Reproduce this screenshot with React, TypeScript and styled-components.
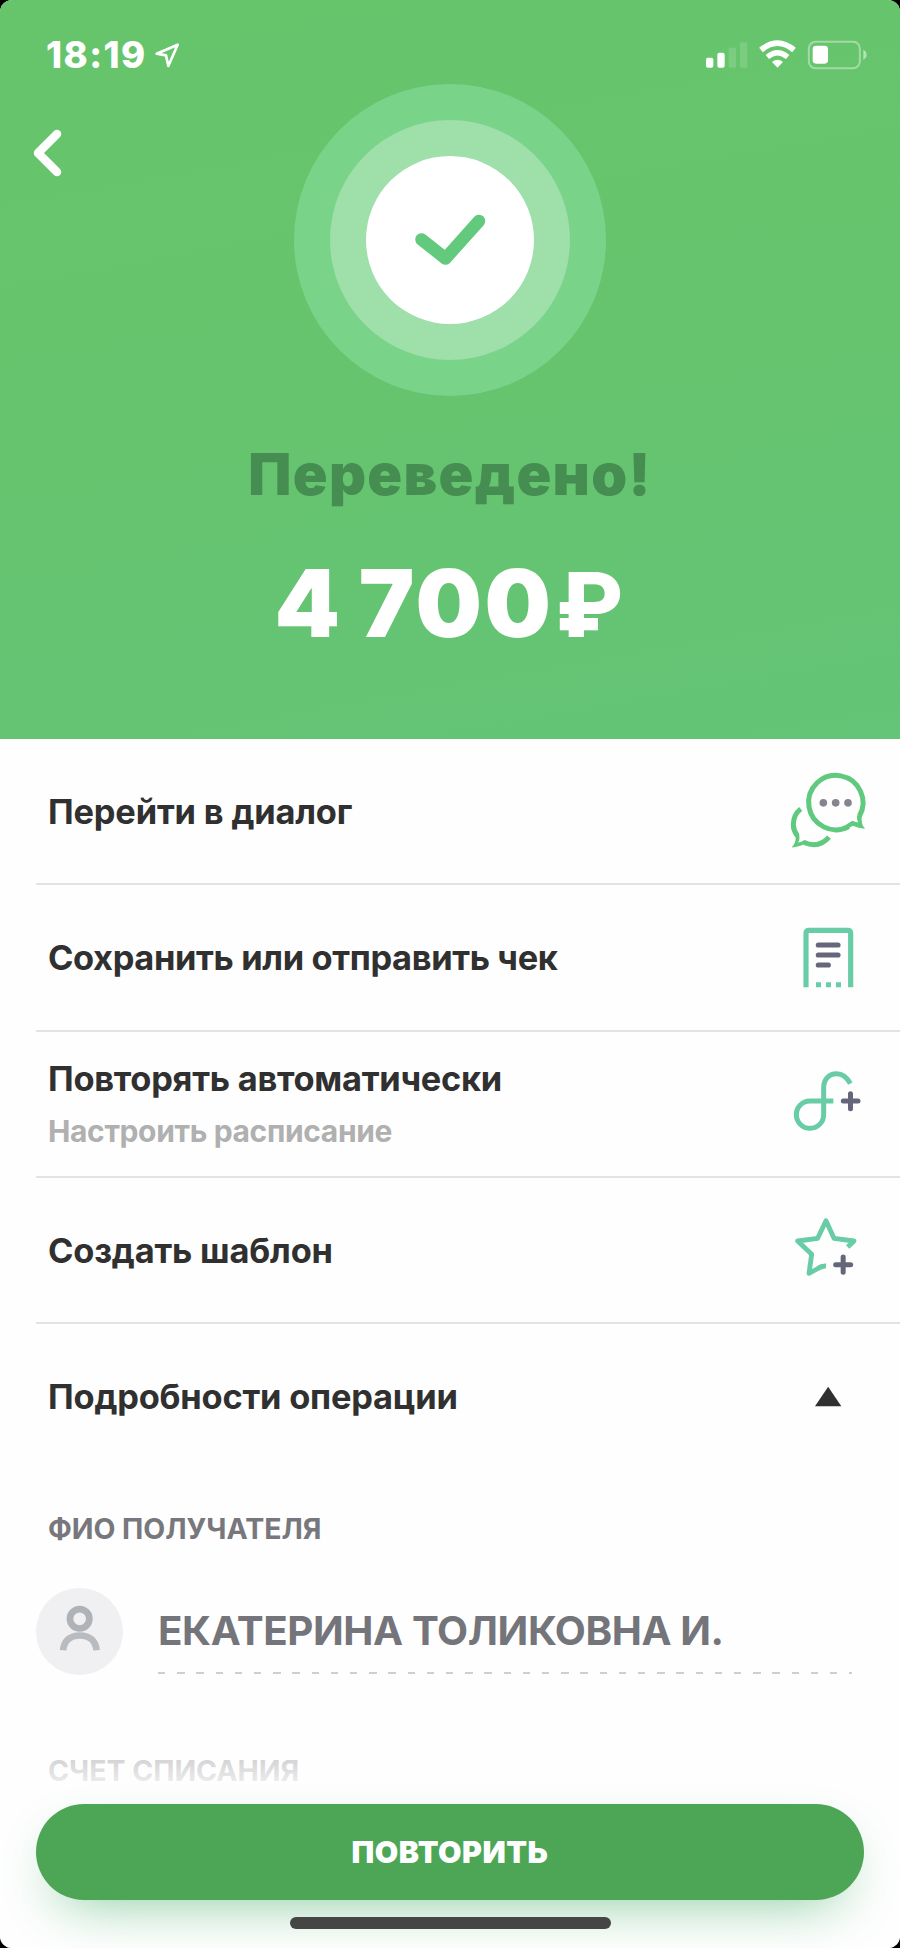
import React from 'react';
import styled, { createGlobalStyle } from 'styled-components';

const GlobalStyle = createGlobalStyle`
  body { margin: 0; background: #000; }
  * { box-sizing: border-box; }
`;

const Screen = styled.div`
  position: relative;
  width: 900px;
  height: 1948px;
  overflow: hidden;
  border-radius: 12px;
  background: #fefefe;
  font-family: Inter, "Noto Sans", sans-serif;
  font-weight: 700;
  color: #303030;
`;

const Hero = styled.header`
  display: flex;
  flex-direction: column;
  align-items: center;
  height: 739px;
  background: linear-gradient(170deg, #66c56b 0%, #66c46e 50%, #64c477 100%);
`;

const StatusBar = styled.div`
  display: flex;
  align-items: center;
  width: 100%;
  height: 84px;
  padding: 26px 31px 0 46px;
  color: #fff;
`;

const Clock = styled.span`
  width: 102px;
  font-size: 36.5px;
  line-height: 40px;
  font-weight: 800;
  letter-spacing: 1.4px;
`;

const LocationIcon = styled.svg`
  width: 26px;
  height: 26px;
  margin: 0 auto 0 5.7px;
`;

const StatusIcons = styled.svg`
  width: 165px;
  height: 34px;
`;

const HeroTop = styled.div`
  display: grid;
  grid-template-columns: 1fr 312px 1fr;
  width: 100%;
  height: 312px;
`;

const BackButton = styled.button`
  width: 60px;
  height: 60px;
  margin: 39px 0 0 17px;
  padding: 0;
  border: 0;
  background: none;
`;

const Ring = styled.div<{ $size: number; $color: string }>`
  display: flex;
  align-items: center;
  justify-content: center;
  width: ${(p) => p.$size}px;
  height: ${(p) => p.$size}px;
  border-radius: 50%;
  background: ${(p) => p.$color};
`;

const Status = styled.h1`
  margin: 43px 0 0;
  font-size: 57.5px;
  line-height: 70px;
  font-weight: 900;
  letter-spacing: 1.3px;
  color: #468d51;
`;

const Amount = styled.div`
  display: flex;
  align-items: baseline;
  margin-top: 44px;
  font-size: 93.5px;
  line-height: 100px;
  font-weight: 900;
  letter-spacing: 2.5px;
  word-spacing: -5px;
  color: #fff;
`;

const Currency = styled.span`
  margin-left: 2px;
  font-size: 89px;
  font-weight: 800;
`;

const Row = styled.div<{ $last?: boolean }>`
  display: flex;
  align-items: center;
  justify-content: space-between;
  height: ${(p) => (p.$last ? 144 : 146.25)}px;
  margin-left: 36px;
  padding: ${(p) => (p.$last ? 1 : 2)}px 29.3px 0 12px;
  border-bottom: ${(p) => (p.$last ? 0 : 2)}px solid #e3e3e3;
`;

const RowText = styled.div`
  display: flex;
  flex-direction: column;
  gap: 12px;
`;

const RowTitle = styled.span<{ $tracking: number }>`
  font-size: 34.4px;
  line-height: 40px;
  letter-spacing: ${(p) => p.$tracking}px;
  white-space: nowrap;
`;

const RowHint = styled.span`
  font-size: 30px;
  line-height: 40px;
  letter-spacing: -0.36px;
  color: #b0b0b0;
`;

const RowIcon = styled.svg`
  width: 84px;
  height: 84px;
  fill: none;
`;

const FieldLabel = styled.h2`
  margin: 0;
  padding-left: 48px;
  font-size: 28.5px;
  line-height: 40px;
  font-weight: 700;
  letter-spacing: -0.04px;
  color: #77777d;
`;

const Details = styled.section`
  display: flex;
  flex-direction: column;
  padding-top: 41px;
`;

const Recipient = styled.div`
  display: flex;
  gap: 35px;
  margin: 39px 48px 76px 36px;
`;

const Avatar = styled.svg`
  flex: none;
  width: 87px;
  height: 87px;
`;

const NameField = styled.div`
  flex: 1;
  height: 86px;
  padding-top: 18px;
  background: repeating-linear-gradient(90deg, #cfcfd0 0 7.5px, transparent 7.5px 19.2px) left bottom / 100% 2.5px no-repeat;
`;

const Name = styled.span`
  display: block;
  font-size: 40.3px;
  line-height: 50px;
  letter-spacing: -0.4px;
  color: #74747b;
  white-space: nowrap;
`;

const Footer = styled.footer`
  position: absolute;
  left: 0;
  right: 0;
  bottom: 0;
  display: flex;
  flex-direction: column;
  align-items: center;
  height: 248px;
  padding: 104px 36px 0;
  background: linear-gradient(rgba(254, 254, 254, 0), rgba(254, 254, 254, 0.68) 58px, rgba(254, 254, 254, 0.86) 82px, #fefefe 104px);
`;

const RepeatButton = styled.button`
  width: 100%;
  height: 96px;
  padding: 0;
  border: 0;
  border-radius: 48px;
  background: #4ca656;
  box-shadow: 0 20px 56px -22px rgba(70, 175, 105, 0.75);
  font: 900 30.3px/40px Inter, "Noto Sans", sans-serif;
  letter-spacing: 0.5px;
  color: #fff;
`;

const HomeIndicator = styled.div`
  z-index: 1;
  width: 321px;
  height: 12px;
  margin-top: 17px;
  border-radius: 6px;
  background: #454545;
`;

const GREEN = '#5fc97d';
const MINT = '#68cca6';
const SLATE = '#66667a';

const ChatIcon = () => (
  <RowIcon viewBox="80 88.5 252 252">
    <path d="M265 258A81.500 81.500 0 1 1 297 227" stroke={GREEN} strokeWidth="15" />
    <path d="M262 265L277 256Q294 263 314 265Q302 252 304 228L290 224Q289 236 293 246Q284 244 276 241L258 252Z" fill={GREEN} />
    <path d="M121 205C104 219 99 236 99 252Q99 270 111 286M131 306Q176 325 206 290" stroke={GREEN} strokeWidth="15" />
    <path d="M92 262L106 292Q107 306 94 321Q118 318 129 312L138 300L130 299Q125 304 113 306Q120 294 116 281L106 262Z" fill={GREEN} />
    <g fill="#85858f">
      <circle cx="189" cy="187" r="11.5" />
      <circle cx="226" cy="187" r="11.5" />
      <circle cx="263" cy="187" r="11.5" />
    </g>
  </RowIcon>
);

const ReceiptIcon = () => (
  <RowIcon viewBox="80 527 252 252">
    <path d="M137 741V579Q137 570 146 570H262Q271 570 271 579V741" stroke={MINT} strokeWidth="15.5" />
    <path d="M174 614H233M174 644H233M174 674H204" stroke={SLATE} strokeWidth="15.5" strokeLinecap="round" />
    <path d="M167 733.500H182M197 733.500H212M227 733.500H242" stroke={MINT} strokeWidth="15" />
  </RowIcon>
);

const AutoRepeatIcon = () => (
  <RowIcon viewBox="80 69 252 252">
    <path d="M270 131C257 106 242 101 229 101C204 101 190 120 190 144V223A41 41 0 1 1 149 183H219" stroke={MINT} strokeWidth="15" />
    <path d="M249 183H293M270.500 161V206" stroke={SLATE} strokeWidth="15" strokeLinecap="round" />
  </RowIcon>
);

const StarIcon = () => (
  <RowIcon viewBox="80 507 252 252">
    <path d="M197 678Q184 677 170 687L146 700L154 643L112 603L172 595L197 542L221 595L281 603L262 621" stroke={MINT} strokeWidth="14.5" strokeLinejoin="round" />
    <path d="M226 674H271M248.500 651V697" stroke={SLATE} strokeWidth="15" strokeLinecap="round" />
  </RowIcon>
);

const CollapseIcon = () => (
  <RowIcon viewBox="80 944 252 252">
    <path d="M203.500 1039L243 1098H164Z" fill="#303030" />
  </RowIcon>
);

export default function App() {
  return (
    <>
      <GlobalStyle />
      <Screen>
        <Hero>
          <StatusBar>
            <Clock>18:19</Clock>
            <LocationIcon viewBox="461 125 78 78" fill="none" stroke="#fff" strokeWidth="8" strokeLinejoin="round">
              <path d="M532 133L469 160L497 165L504 197Z" />
            </LocationIcon>
            <StatusIcons viewBox="160 115 495 102" fill="#fff">
              <rect x="166" y="174" width="22" height="30" rx="6" />
              <rect x="200" y="159" width="22" height="45" rx="6" />
              <rect x="234" y="144" width="22" height="60" rx="4" opacity=".14" />
              <rect x="268" y="128" width="22" height="76" rx="4" opacity=".14" />
              <path d="M380.500 204L364 187Q380.500 173 397 187Z" />
              <path d="M350 172Q380.500 146 411 172" fill="none" stroke="#fff" strokeWidth="16" />
              <path d="M331 151Q380.500 110 430 151" fill="none" stroke="#fff" strokeWidth="17" />
              <rect x="474.500" y="126.500" width="153" height="79" rx="20" fill="none" stroke="#fff" strokeWidth="6" opacity=".4" />
              <rect x="486" y="138" width="46" height="54" rx="10" />
              <path d="M638 150Q648 155 648 165Q648 175 638 180Z" opacity=".5" />
            </StatusIcons>
          </StatusBar>
          <HeroTop>
            <BackButton aria-label="Назад">
              <svg width="60" height="60" viewBox="0 0 60 60" fill="none">
                <path d="M40 11L21 30L40 49" stroke="#fff" strokeWidth="8.5" strokeLinecap="round" strokeLinejoin="round" />
              </svg>
            </BackButton>
            <Ring $size={312} $color="#79d389">
              <Ring $size={240} $color="#9edfaa">
                <Ring $size={168} $color="#ffffff">
                  <svg width="84" height="84" viewBox="0 0 84 84" fill="none">
                    <path d="M13.500 41.500L37.500 60.500L71 23" stroke="#62c97d" strokeWidth="12.500" strokeLinecap="round" strokeLinejoin="round" />
                  </svg>
                </Ring>
              </Ring>
            </Ring>
          </HeroTop>
          <Status>Переведено!</Status>
          <Amount>
            4 700<Currency>₽</Currency>
          </Amount>
        </Hero>

        <Row>
          <RowTitle $tracking={-0.17}>Перейти в диалог</RowTitle>
          <ChatIcon />
        </Row>
        <Row>
          <RowTitle $tracking={-0.36}>Сохранить или отправить чек</RowTitle>
          <ReceiptIcon />
        </Row>
        <Row>
          <RowText>
            <RowTitle $tracking={-0.25}>Повторять автоматически</RowTitle>
            <RowHint>Настроить расписание</RowHint>
          </RowText>
          <AutoRepeatIcon />
        </Row>
        <Row>
          <RowTitle $tracking={-0.18}>Создать шаблон</RowTitle>
          <StarIcon />
        </Row>
        <Row $last>
          <RowTitle $tracking={-0.2}>Подробности операции</RowTitle>
          <CollapseIcon />
        </Row>

        <Details>
          <FieldLabel>ФИО ПОЛУЧАТЕЛЯ</FieldLabel>
          <Recipient>
            <Avatar viewBox="108 84 260 260" fill="none">
              <circle cx="238" cy="214" r="130" fill="#f0f0f2" />
              <circle cx="238.500" cy="176" r="29" stroke="#afb3b8" strokeWidth="20" />
              <path d="M189 270C192 242 209 226 239 226C269 226 286 242 289 270" stroke="#b8bbbf" strokeWidth="20" />
            </Avatar>
            <NameField>
              <Name>ЕКАТЕРИНА ТОЛИКОВНА И.</Name>
            </NameField>
          </Recipient>
          <FieldLabel>СЧЕТ СПИСАНИЯ</FieldLabel>
        </Details>

        <Footer>
          <RepeatButton>ПОВТОРИТЬ</RepeatButton>
          <HomeIndicator />
        </Footer>
      </Screen>
    </>
  );
}
